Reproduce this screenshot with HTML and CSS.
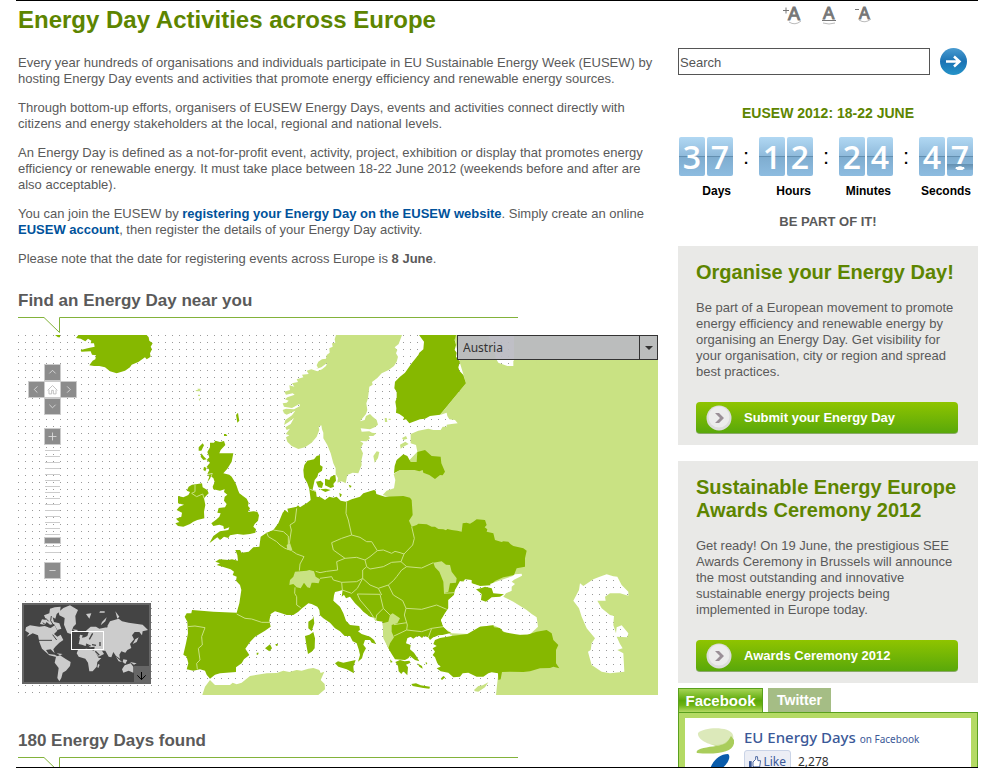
FILE: index.html
```html
<!DOCTYPE html>
<html lang="en">
<head>
<meta charset="utf-8">
<title>Energy Day Activities across Europe</title>
<link rel="stylesheet" href="styles.css">
</head>
<body>
<div class="page">
<main class="content">
  <h1>Energy Day Activities across Europe</h1>
  <p>Every year hundreds of organisations and individuals participate in EU Sustainable Energy Week (EUSEW) by hosting Energy Day events and activities that promote energy efficiency and renewable energy sources.</p>
  <p>Through bottom-up efforts, organisers of EUSEW Energy Days, events and activities connect directly with citizens and energy stakeholders at the local, regional and national levels.</p>
  <p>An Energy Day is defined as a not-for-profit event, activity, project, exhibition or display that promotes energy efficiency or renewable energy. It must take place between 18-22 June 2012 (weekends before and after are also acceptable).</p>
  <p>You can join the EUSEW by <a href="#register">registering your Energy Day on the EUSEW website</a>. Simply create an online <a href="#account">EUSEW account</a>, then register the details of your Energy Day activity.</p>
  <p>Please note that the date for registering events across Europe is <strong>8 June</strong>.</p>

  <h2>Find an Energy Day near you</h2>
  <svg class="callout" viewBox="0 0 500 16" aria-hidden="true"><path d="M0 .5H26L41.500 15.500V.5H500"/></svg>

  <div class="map">
    <svg class="europe" viewBox="-456 15 1920 1080" role="img" aria-label="Map of Europe">
      <defs>
        <pattern id="sea" x="-456" y="15" width="21" height="21" patternUnits="userSpaceOnUse">
          <rect width="21" height="21" fill="#fff"/><rect width="3" height="3" fill="#999"/>
        </pattern>
      </defs>
      <rect x="-456" y="15" width="1920" height="1080" fill="url(#sea)"/>
      <g class="light">
        <path d="M498 15 494 28 496 38 486 40 488 50 478 55 479 68 470 75 468 86 456 88 445 95 440 106 444 114 436 118 454 112 472 98 468 108 456 118 442 124 424 118 410 122 416 132 396 134 400 142 380 148 384 156 366 160 373 170 358 166 360 180 343 185 348 194 368 190 374 194 352 202 345 208 356 212 350 218 338 220 342 230 366 234 388 222 390 228 372 238 348 236 338 240 342 250 350 254 360 250 376 242 366 256 346 270 342 285 356 276 372 264 362 282 346 292 350 300 360 296 352 306 347 312 358 316 348 322 352 335 365 348 385 357 405 352 425 338 440 320 448 300 446 290 454 286 456 298 460 308 460 325 472 345 482 370 490 400 497 415 497 432 504 444 502 458 515 454 527 460 532 435 548 428 565 430 575 405 574 392 579 370 572 355 580 340 570 333 590 334 600 325 596 318 610 318 619 310 606 308 598 304 575 305 572 295 600 298 614 292 624 284 620 270 608 260 600 252 588 258 584 270 570 274 588 252 592 240 589 220 594 205 598 170 608 164 606 156 622 144 635 130 656 120 672 108 680 95 684 80 678 70 682 60 674 52 686 42 696 15Z"/>
        <path d="M852 15H1464V1095H978L985 1030V1000L850 930 820 880 800 800 720 700 700 500 660 502 638 495 650 482 672 475 676 450 671 432 690 420 742 365 738 345 722 340 722 312 745 302 775 296 790 300 812 300 818 290 830 290 830 284 845 282 863 280 855 270 838 268 832 258 830 248 810 255 888 160 870 100Z"/>
        <path d="M97 1095 105 1070 120 1050 135 1065 180 1065 188 1058 200 1063 215 1058 228 1048 240 1038 290 1030 320 1029 340 1022 358 1026 380 1020 395 1022 415 1016 430 1014 448 1020 452 1029 463 1025 452 1050 464 1062 465 1078 445 1095Z"/>
        <path d="M610 378 620 364 628 366 624 384 614 398ZM690 344 706 335 716 342 700 350 692 356ZM696 324 708 318 712 326 700 330ZM644 264H650L652 276H645ZM656 266H662V270H656ZM76 180H84L82 176H92L90 184H80ZM84 194H90V198H84ZM86 206H91L89 214ZM912 1080 925 1068 938 1066 955 1057 945 1072 925 1085 915 1084Z"/>
      </g>
      <g class="dark">
        <path d="M-275 15-282 24-268 26-254 34-246 26-236 32-238 40-228 40-226 50-244 54-268 60-266 65-238 64-234 74-222 76-224 88-232 92-242 106-228 108-212 108-195 112-180 124-160 130-135 122-120 112-115 104-95 96-75 82-70 88-58 80-60 70-54 58-58 50-52 40-62 32-64 22-70 15Z"/>
        <path d="M-345 15H-330V22H-336Z"/>
        <path d="M747 15 762 35 760 58 748 68 745 75 725 100 705 128 690 140 675 155 673 175 680 185 680 205 676 215 679 235 678 248 688 252 702 262 700 270 708 268 718 280 750 268 765 266 780 258 810 254 888 160 880 135 868 122 865 112 870 95 858 80 860 68 854 60 858 45 854 30 858 15Z"/>
        <path d="M672 430 674 408 680 390 700 373 712 378 722 396 740 396 742 366 765 360 785 378 812 380 814 400 825 425 818 436 810 435 795 447 778 435 760 428 758 420 748 424 734 420 690 420Z"/>
        <path d="M120 338 132 338 136 332 150 336 162 333 166 345 152 360 148 370 190 370 185 395 172 416 160 430 178 434 185 440 196 458 200 468 204 480 208 490 230 506 236 518 234 528 240 535 234 546 250 544 262 545 267 556 264 572 254 582 250 590 258 598 256 608 240 612 220 614 202 612 180 616 175 624 162 620 150 630 142 622 118 640 130 618 150 604 175 600 178 592 162 598 160 588 148 584 130 588 124 580 140 568 148 560 152 550 142 548 146 534 165 532 170 522 162 512 164 500 172 494 162 486 164 478 150 482 130 478 128 470 134 456 130 444 124 440 128 430 112 432 118 420 110 410 120 398 110 390 118 382 112 366 120 352Z"/>
        <path d="M86 352 98 340 102 346 94 362 86 362ZM94 370 102 380 110 388 100 390 92 380ZM102 410 110 414 106 424 100 420ZM112 434 126 432 120 446 112 456 118 440ZM162 312H168L172 318H162ZM198 255 204 248 206 262 208 272 202 278Z"/>
        <path d="M24 498 40 502 55 495 60 486 50 482 56 470 66 464 78 463 96 460 98 472 112 480 116 490 108 498 102 505 106 525 102 545 103 565 82 570 70 575 60 582 40 590 24 588 16 580 28 576 18 566 34 560 36 548 20 540 28 530 42 524 24 520Z"/>
        <path d="M403 405 412 392 432 388 440 378 450 375 450 405 458 410 456 422 445 430 442 440 434 450 428 478 420 482 412 460 402 442 400 420ZM438 455 452 452 460 460 456 474 445 472ZM465 446 478 450 482 440 496 434 498 452 490 462 492 470 482 474 465 466ZM468 476 482 480 466 486 450 478ZM536 464 545 468 540 474ZM508 488 516 494 510 502Z"/>
        <path d="M418 478 438 485 440 500 452 502 465 510 478 500 490 503 500 500 512 512 528 515 545 508 570 500 580 490 612 480 617 482 619 492 645 500 700 498 720 503 725 510 728 555 717 572 725 590 740 585 745 581 770 583 785 590 795 590 805 597 820 598 828 601 832 597 845 600 862 602 875 605 878 580 890 578 900 581 910 575 920 568 945 570 950 585 944 592 952 598 950 605 970 610 975 630 995 636 1000 634 1015 635 1022 643 1030 648 1060 655 1070 662 1065 685 1065 710 1040 715 1032 735 1000 742 975 753 960 768 930 768 905 760 900 750 875 753 870 772 855 780 852 795 835 810 835 835 825 850 813 870 820 890 835 905 845 908 790 922 780 930 775 922 762 918 756 924 748 918 738 920 730 926 722 920 712 925 708 940 722 945 720 958 732 968 740 980 748 994 735 990 720 978 715 985 705 990 675 988 665 972 655 955 641 920 638 875 620 872 616 864 600 860 580 845 570 834 555 820 540 800 528 805 522 794 515 800 518 780 505 784 495 786 492 796 490 812 510 830 520 850 528 872 540 885 568 888 570 900 564 904 575 912 600 920 612 930 618 942 605 938 600 930 585 930 580 944 588 955 580 970 576 985 564 995 570 975 566 958 560 940 548 934 540 918 524 918 510 904 495 895 480 878 460 865 450 856 448 840 442 830 425 822 415 820 405 828 396 835 385 845 370 855 350 855 330 848 315 844 302 852 298 872 302 890 285 902 255 920 240 936 226 956 238 975 222 988 215 1000 198 1012 198 1026 150 1030 135 1034 120 1046 110 1034 105 1022 90 1018 70 1022 50 1018 55 1000 50 980 40 974 48 940 54 910 52 875 44 860 50 850 64 850 66 840 130 845 200 848 208 820 214 780 210 765 198 752 200 740 188 735 192 725 182 718 150 708 140 705 150 700 136 695 148 688 175 690 186 688 204 692 202 675 196 660 210 660 215 668 236 665 250 652 268 650 272 620 290 608 310 600 325 580 338 548 345 540 355 548 352 536 380 530 384 526 390 532 402 524 412 518 422 510Z"/>
        <path d="M495 1000 504 994 520 998 557 990 550 1010 552 1030 530 1018 505 1010ZM405 918 418 914 430 906 435 925 434 955 425 965 414 972 410 950ZM415 875 428 866 430 858 433 880 425 904 415 895ZM285 955 300 943 306 955 298 964ZM316 942 324 942 322 948 318 947ZM260 968H266L264 974H260ZM676 996 690 990 704 994 718 992 722 998 708 1004 714 1012 712 1036 700 1024 694 1032 686 1024 684 1008ZM724 1062 738 1060 752 1066 780 1070 778 1076 760 1074 728 1068ZM812 1046 820 1038 826 1042 816 1050ZM660 988 668 996 662 998ZM742 1000 756 1008 758 1016 748 1010ZM767 995 772 1000 768 1004Z"/>
      </g>
      <g class="light">
        <path d="M375 725 410 722 418 720 432 724 437 740 450 748 446 760 432 758 425 758 420 774 412 772 402 758 392 775 380 772 370 762 358 765 360 750 370 740ZM350 645 360 639 367 660 352 660ZM790 698 815 694 828 704 840 705 845 725 860 745 858 758 840 760 835 785 822 790 820 755 808 725 795 712ZM660 855 668 850 690 865 682 880 665 885 665 905 672 922 660 940 655 955 640 925 638 880 655 875Z"/>
      </g>
      <path class="border" d="M52 890 75 888 105 893 95 920 97 945 85 955 90 990 80 1000 82 1018M200 852 225 865 245 867 275 877 300 877M290 608 295 620 320 635 330 645 345 655 365 662 380 672 402 680 390 702 388 722M310 600 340 605 355 618 355 645M380 535 375 575 360 585 364 600 358 640M375 772 374 790 380 800 380 825 392 833M530 515 528 550 535 570 545 615 515 625 485 638 490 660 525 685 560 682 585 690 600 680 622 662 605 635 590 635 570 622 545 615M525 685 500 695 503 720 470 724 450 728 437 724M622 662 640 660 665 670 675 664 690 668 702 672 693 695 665 697 640 710 600 717 590 710 585 690M693 695 710 710 755 714 790 698M725 590 733 625 728 645 702 672M590 710 578 720 578 745 560 755 515 757 490 750 485 740 450 745M578 745 600 765 625 775 655 765 670 752 680 740 695 720 710 710M655 765 670 795 698 812 708 835 703 855 712 885 710 900 672 918M708 835 755 838 800 825 830 838M710 900 755 905 785 895 820 890M785 895 775 922M562 792 630 793 640 835 620 855 617 872 600 845 570 810 562 792M625 775 635 795M640 835 660 855M515 757 517 780 545 790 562 775 578 745M822 790 852 788M75 465 75 485 65 490 80 500 98 492 102 505M420 478 438 484M672 884 710 878"/>
      <g fill="url(#sea)">
        <path d="M870 753 880 756 885 748 905 750 905 760 930 768 962 766 960 762 985 753 1028 738 1035 733 1055 731 1056 737 1032 749 1025 755 1035 762 1025 770 1025 782 1008 790 1000 800 1030 815 1070 840 1085 852 1100 862 1104 890 1080 913 1020 915 990 898 984 892 970 886 930 890 895 912 845 910 820 890 813 870 825 850 835 835 835 810 852 795 855 780ZM785 926 805 916 845 914 845 920 810 930ZM1310 733 1330 739 1342 740 1355 765 1375 785 1375 797 1350 790 1320 790 1305 800 1307 812 1282 812 1295 835 1320 855 1332 858 1330 885 1338 910 1340 892 1355 886 1375 910 1372 922 1340 920 1350 942 1358 955 1342 960 1360 970 1363 1025 1320 1030 1295 1025 1265 1005 1258 980 1254 965 1262 960 1265 940 1275 925 1250 895 1235 860 1227 835 1210 812 1227 780 1230 760 1240 768 1270 748 1285 742ZM950 15H1050L1080 90H1040L1030 92V108H1012L985 98 975 80Z"/>
      </g>
      <path class="light" d="M1032 15H1100V100H1032ZM940 15H955L978 80H940Z"/>
      <g class="dark">
        <path d="M918 778 935 774 945 770 965 775 970 790 1002 793 990 800 965 802 948 815 933 810 935 792ZM795 930 810 924 845 918 892 912 930 890 970 886 972 892 990 894 1000 906 1020 910 1050 915 1072 914 1100 905 1130 900 1145 910 1150 930 1165 945 1158 960 1158 1000 1168 1015 1150 1010 1140 1014 1110 1015 1080 1024 1060 1026 1020 1025 996 1026 992 1048 985 1050 984 1030 965 1027 955 1030 940 1040 920 1040 895 1028 878 1030 870 1040 850 1042 835 1028 812 1024 800 1015 812 1010 802 1000 795 982 788 975 795 965 788 955 800 948 790 942Z"/>
      </g>
    </svg>

    <div class="country">
      <select aria-label="Country"><option>Austria</option></select>
      <span class="country-arrow" aria-hidden="true"></span>
    </div>

    <div class="pad">
      <button class="up" aria-label="Pan north"><svg viewBox="0 0 17 17"><path d="M5 9.500 8.500 6 12 9.500"/></svg></button>
      <button class="left" aria-label="Pan west"><svg viewBox="0 0 17 17"><path d="M9.500 5 6 8.500 9.500 12"/></svg></button>
      <button class="home" aria-label="Reset view"><svg viewBox="0 0 17 17"><path d="M3 9.500 8.500 4 14 9.500M4.500 9V13.500H7.500V9.500H9.500V13.500H12.500V9"/></svg></button>
      <button class="right" aria-label="Pan east"><svg viewBox="0 0 17 17"><path d="M7 5 10.500 8.500 7 12"/></svg></button>
      <button class="down" aria-label="Pan south"><svg viewBox="0 0 17 17"><path d="M5 6.500 8.500 10 12 6.500"/></svg></button>
    </div>
    <div class="zoom">
      <button aria-label="Zoom in"><svg viewBox="0 0 17 17"><path d="M4 8.500H13M8.500 4V13"/></svg></button>
      <div class="track"><span class="thumb"></span></div>
      <button aria-label="Zoom out"><svg viewBox="0 0 17 17"><path d="M5 8.500H12"/></svg></button>
    </div>

    <svg class="world" viewBox="36 279 387 243" role="img" aria-label="World overview">
      <rect x="36" y="279" width="387" height="243" fill="#666"/>
      <rect x="42" y="285" width="375" height="231" fill="#444"/>
      <g fill="#ccc">
        <path d="M48 352 60 346 88 350 104 348 122 354 134 346 142 362 132 372 142 380 152 374 160 390 148 398 136 410 130 418 134 430 122 418 108 420 116 432 134 434 148 442 136 440 118 436 96 416 88 396 84 376 68 370 50 380 58 370 46 362Z"/>
        <path d="M90 342 96 328 108 330 102 316 118 310 120 296 134 292 152 290 150 304 140 312 136 326 128 322 132 336 148 340 154 356 142 360 132 342 120 344 110 336 104 344ZM160 294 180 286 204 300 196 318 198 342 190 350 182 372 172 368 162 344 164 324 148 316 146 306Z"/>
        <path d="M138 440 150 436 166 446 182 456 180 468 168 482 158 488 154 504 148 514 142 504 146 474 134 458Z"/>
        <path d="M204 420 230 416 254 422 266 444 274 444 262 456 260 470 248 484 238 484 234 458 226 446 206 440 200 430ZM264 462 269 464 265 474 262 472Z"/>
        <path d="M206 402 210 384 224 382 232 378 236 366 228 362 242 350 258 350 268 356 290 352 300 334 326 326 336 334 356 338 398 344 414 360 398 364 396 376 388 366 374 366 366 376 372 388 360 402 364 414 352 420 346 428 334 424 328 434 330 446 318 438 310 426 304 442 296 440 286 422 276 422 282 432 266 440 252 424 254 410 240 412 232 402 226 408 216 404ZM210 374 218 376 214 388 208 384Z"/>
        <path d="M336 478 344 466 362 460 370 470V488L356 482 340 488ZM318 440 336 456 326 454ZM340 448 352 450 346 462 338 456ZM360 456 380 460 372 464ZM228 312 244 310 238 326ZM276 336 290 322 286 334 272 346ZM188 358 204 360 198 366ZM316 304 328 320 322 326ZM140 430 158 432 150 436ZM376 388 386 382 380 396 368 402ZM270 304H284V308H268Z"/>
      </g>
      <path d="M98 338 118 352M106 324 116 334M124 318 122 332 132 348M84 391H126M128 374 140 390" fill="none" stroke="#444" stroke-width="3"/>
      <path d="M238 388 248 370M228 402 242 408M246 404 258 406M270 396V408M256 424 268 436M286 346 292 352" fill="none" stroke="#444" stroke-width="4"/>
      <rect x="184.500" y="364.500" width="96" height="54" fill="none" stroke="#fff" stroke-width="3"/>
      <rect x="372" y="468" width="51" height="54" fill="#666"/>
      <path d="M394.500 486V508M382 496 394.500 509 407 496" fill="none" stroke="#000" stroke-width="3"/>
    </svg>
  </div>

  <h2 class="found">180 Energy Days found</h2>
  <svg class="callout" viewBox="0 0 500 16" aria-hidden="true"><path d="M0 .5H26L41.500 15.500V.5H500"/></svg>
</main>

<aside class="sidebar">
  <div class="text-size">
    <button aria-label="Larger text"><svg width="22" height="20" viewBox="0 0 22 20"><path d="M1 5.500H7M4 2.500V8.500"/><text x="6" y="15" font-size="18">A</text><path class="swoosh" d="M7 17Q13 21 19 16"/></svg></button>
    <button aria-label="Normal text"><svg width="16" height="20" viewBox="0 0 16 20"><text x="2" y="14" font-size="17">A</text><path d="M1 15.500H15"/><path class="swoosh" d="M2 18Q8 20 14 18"/></svg></button>
    <button aria-label="Smaller text"><svg width="18" height="20" viewBox="0 0 18 20"><path d="M1 4.500H5"/><text x="5" y="14" font-size="16">A</text><path class="swoosh" d="M5 15Q11 19 17 14"/></svg></button>
  </div>

  <form class="search">
    <input type="text" value="Search" aria-label="Search">
    <button type="button" aria-label="Go"><svg viewBox="0 0 27 27"><defs><linearGradient id="blue" x2="0" y2="1"><stop stop-color="#4a9bd0"/><stop offset=".5" stop-color="#1b73b4"/><stop offset="1" stop-color="#2593c8"/></linearGradient></defs><circle cx="13.500" cy="13.500" r="13.500" fill="url(#blue)"/><path d="M6 13.500H19M14 8.500 19.500 13.500 14 18.500" fill="none" stroke="#fff" stroke-width="2.500"/></svg></button>
  </form>

  <h3 class="event">EUSEW 2012: 18-22 JUNE</h3>
  <div class="countdown">
    <div class="unit"><div class="digits"><span>3</span><span>7</span></div><b>Days</b></div>
    <div class="colon">:</div>
    <div class="unit"><div class="digits"><span>1</span><span>2</span></div><b>Hours</b></div>
    <div class="colon">:</div>
    <div class="unit"><div class="digits"><span>2</span><span>4</span></div><b>Minutes</b></div>
    <div class="colon">:</div>
    <div class="unit"><div class="digits"><span>4</span><span class="flip">7</span></div><b>Seconds</b></div>
  </div>
  <p class="slogan">BE PART OF IT!</p>

  <section class="promo">
    <h2>Organise your Energy Day!</h2>
    <p>Be part of a European movement to promote energy efficiency and renewable energy by organising an Energy Day. Get visibility for your organisation, city or region and spread best practices.</p>
    <a class="cta" href="#submit"><svg viewBox="0 0 26 26"><circle cx="13" cy="13" r="12.500" fill="#dcdcdc"/><circle cx="13" cy="12" r="10.500" fill="#ececec"/><path d="M9 8H13L18 13 13 18H9L14 13Z" fill="#9a8f97"/></svg>Submit your Energy Day</a>
  </section>

  <section class="promo">
    <h2>Sustainable Energy Europe Awards Ceremony 2012</h2>
    <p>Get ready! On 19 June, the prestigious SEE Awards Ceremony in Brussels will announce the most outstanding and innovative sustainable energy projects being implemented in Europe today.</p>
    <a class="cta" href="#awards"><svg viewBox="0 0 26 26"><circle cx="13" cy="13" r="12.500" fill="#dcdcdc"/><circle cx="13" cy="12" r="10.500" fill="#ececec"/><path d="M9 8H13L18 13 13 18H9L14 13Z" fill="#9a8f97"/></svg>Awards Ceremony 2012</a>
  </section>

  <div class="social">
    <div class="tabs"><button class="active">Facebook</button><button>Twitter</button></div>
    <div class="panel">
      <div class="fb">
        <svg class="logo" viewBox="0 0 38 50" aria-hidden="true"><path d="M2 5C8-1 34-2 37 7 39 15 32 18 25 18 14 18 1 12 2 5Z" fill="#dce9ba"/><path d="M38 12C40 24 22 27 1 25-2 21 12 19 20 18 28 17 32 14 35 8Z" fill="#a9cd5b"/><path d="M35 9C32 15 28 17 20 18L14 16C22 18 31 17 35 9Z" fill="#c5dc8e"/><path d="M32 26C37 30 27 44 14 46 12 40 20 26 32 26Z" fill="#0a5cab"/></svg>
        <div>
          <div class="fb-title"><a href="#fb">EU Energy Days</a> <small>on Facebook</small></div>
          <div class="fb-like"><button><svg width="14" height="14" viewBox="0 0 14 14"><path d="M0 6H3V13H0Z" fill="#3b5998"/><path d="M4.500 12V7L7.500 4V1H9.500L10 5.500H13L12 12.500H6Z" fill="#fff" stroke="#3b5998"/></svg>Like</button><span>2,278</span></div>
        </div>
      </div>
    </div>
  </div>
</aside>
</div>
</body>
</html>
```
FILE: styles.css
```css
* { box-sizing: border-box; }
body {
  margin: 0;
  background: #fff;
  color: #5a5a5a;
  font: 13px/16px "Liberation Sans", Arial, sans-serif;
}
button { font: inherit; border: 0; padding: 0; background: none; cursor: pointer; }
svg { display: block; }
h1, h2, h3, p { margin: 0; }

.page {
  display: grid;
  grid-template-columns: minmax(0, 1fr) 300px;
  gap: 20px;
  height: 100vh;
  margin: 0 10px 0 16px;
  padding-left: 2px;
  overflow: hidden;
  border-top: 1px solid #000;
  border-bottom: 1px solid #000;
}

/* Main column */
h1 { margin: 4px 0 20px; color: #5d8500; font-size: 24px; line-height: 30px; }
.content p { margin-bottom: 13px; }
.content a { color: #00529b; font-weight: bold; text-decoration: none; }
.content h2 { margin-top: 24px; font-size: 17px; line-height: 20px; }
.content h2.found { margin-top: 36px; }
.callout { width: 500px; max-width: 100%; height: 16px; margin: 6px 0 2px; }
.callout path { fill: none; stroke: #82b23a; }

.map { position: relative; }
.europe { width: 100%; height: auto; }
.light { fill: #c9e283; }
.dark { fill: #86b800; }
.border { fill: none; stroke: #c9e283; stroke-width: 3; stroke-linejoin: round; }

.country { position: absolute; top: 0; right: 0; width: 201px; height: 25px; }
.country select {
  appearance: none;
  width: 100%;
  height: 100%;
  padding: 0 5px;
  border: 1px solid #333;
  border-radius: 0;
  background: rgba(186, 186, 194, .93);
  color: #333;
  font: 12px "Noto Sans", sans-serif;
}
.country-arrow {
  position: absolute;
  inset: 0 0 0 auto;
  width: 19px;
  border: 1px solid #333;
  pointer-events: none;
}
.country-arrow::after {
  content: "";
  position: absolute;
  top: 10px;
  left: 5px;
  border: 4px solid transparent;
  border-top-color: #333;
}

.pad {
  position: absolute;
  top: 29px;
  left: 10px;
  display: grid;
  grid-template-columns: repeat(3, 16px);
  grid-template-rows: repeat(3, 17px);
  grid-template-areas: ". up ." "left home right" ". down .";
}
.pad button, .zoom button {
  display: block;
  width: 17px;
  height: 17px;
  border: 1px solid #ccc;
  background: #8c8c8c;
}
.pad svg, .zoom svg { width: 15px; height: 15px; fill: none; stroke: #ddd; }
.pad .up { grid-area: up; }
.pad .left { grid-area: left; }
.pad .home { grid-area: home; background: #fff; }
.pad .home svg { stroke: #bbb; }
.pad .right { grid-area: right; }
.pad .down { grid-area: down; }
.zoom { position: absolute; top: 93px; left: 26px; width: 17px; }
.track {
  position: relative;
  height: 103px;
  margin: 5px 1px 9px;
  background: repeating-linear-gradient(#ccc 0 1px, transparent 1px 6px);
}
.thumb {
  position: absolute;
  top: 87px;
  left: -1px;
  width: 17px;
  height: 7px;
  border: 1px solid #ccc;
  background: #8c8c8c;
}
.world { position: absolute; left: 4px; bottom: 11px; width: 129px; height: 81px; }

/* Sidebar */
.text-size { display: flex; gap: 17px; height: 20px; margin: 4px 0 23px 104px; }
.text-size svg { fill: none; stroke: #777; overflow: visible; }
.text-size text { fill: #777; }
.text-size .swoosh { stroke: #bbb; }

.search { display: flex; gap: 10px; }
.search input {
  width: 252px;
  height: 27px;
  padding: 2px 1px 0;
  border: 1px solid #555;
  background: #fff;
  color: #555;
  font: inherit;
}
.search button, .search svg { width: 27px; height: 27px; }

.event { margin: 29px 0 15px; color: #5d8500; font-size: 14px; line-height: 18px; text-align: center; }
.countdown { display: flex; padding-left: 1px; color: #000; }
.unit { width: 54px; }
.digits { display: flex; gap: 2px; }
.digits span {
  width: 26px;
  height: 39px;
  border-radius: 2px;
  background: linear-gradient(#b1d8f3, #8fbadb 49%, #638fb0 49% 52%, #7fadd0 52%, #8dbce0);
  color: #fff;
  font: 600 32px/39px "Open Sans", sans-serif;
  text-align: center;
}
.digits .flip { position: relative; }
.digits .flip::after {
  content: "";
  position: absolute;
  inset: 27px 0 6px;
  background: radial-gradient(ellipse 5px 2px at 50% 70%, #fff 80%, transparent), linear-gradient(#638fb0, #7fadd0);
}
.unit b {
  display: flex;
  justify-content: flex-end;
  margin-top: 7px;
  padding-right: 2px;
  font-size: 12px;
}
.colon { width: 26px; font: 22px/40px "Liberation Sans", sans-serif; text-align: center; }
.slogan { margin: 14px 0 15px; font-weight: bold; line-height: 18px; text-align: center; }

.promo { margin-bottom: 16px; padding: 15px 20px 11px 18px; background: #e9e9e7; }
.promo h2 { margin-right: -10px; margin-bottom: 16px; color: #5d8500; font-size: 20px; line-height: 23px; }
.promo p { margin-bottom: 22px; }
.cta {
  display: flex;
  align-items: center;
  gap: 12px;
  height: 32px;
  padding: 0 10px;
  border-radius: 4px;
  border-bottom: 1px solid #8aa86a;
  background: linear-gradient(#8fc400, #59a80a);
  color: #fff;
  font-weight: bold;
  text-decoration: none;
}
.cta svg { width: 26px; height: 26px; }

.social { margin-top: -11px; }
.tabs { display: flex; align-items: flex-start; gap: 5px; }
.tabs button {
  width: 63px;
  height: 24px;
  background: #a5bd85;
  color: #fff;
  font-weight: bold;
  font-size: 14px;
}
.tabs .active {
  width: 85px;
  border: 1px solid #5aa01e;
  border-bottom: 0;
  background: linear-gradient(#a5d455, #5ba808 50%, #6bb312 70%, #b4da64);
  font-size: 15px;
}
.panel { padding: 5px 6px; border: 1px solid #5aa01e; background: #b4da64; }
.fb { display: flex; gap: 10px; height: 100px; padding: 10px 11px 0; background: #fff; }
.logo { width: 38px; height: 50px; }
.fb-title { font: 15px/18px "Noto Sans", sans-serif; color: #3b5998; }
.fb-title a { font-weight: 500; color: #3b5998; text-decoration: none; }
.fb-title small { font-size: 10px; }
.fb-like { display: flex; align-items: center; gap: 7px; margin-top: 2px; color: #333; font: 12px/24px "Noto Sans", sans-serif; }
.fb-like button {
  display: flex;
  align-items: center;
  gap: 2px;
  width: 47px;
  height: 24px;
  padding: 0 4px;
  border: 1px solid #cad4e7;
  border-radius: 3px;
  background: #eceef5;
  color: #3b5998;
}
```
